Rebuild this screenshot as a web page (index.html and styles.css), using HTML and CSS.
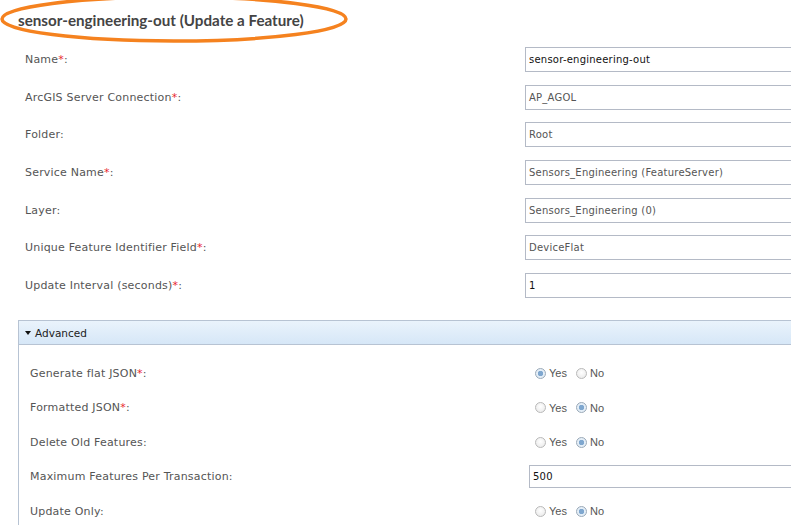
FILE: index.html
```html
<!DOCTYPE html>
<html>
<head>
<meta charset="utf-8">
<link rel="stylesheet" href="styles.css">
</head>
<body>
<div class="page">
  <header class="title-bar">
    <h1 class="title">sensor-engineering-out (Update a Feature)</h1>
    <svg class="annot" width="352" height="46" viewBox="0 0 352 46"><ellipse cx="174" cy="19" rx="172" ry="22" fill="none" stroke="#f5821f" stroke-width="3.5"/></svg>
  </header>

  <div class="form">
    <div class="row"><label class="lbl">Name<span class="req">*</span>:</label><div class="field dark">sensor-engineering-out</div></div>
    <div class="row"><label class="lbl">ArcGIS Server Connection<span class="req">*</span>:</label><div class="field">AP_AGOL</div></div>
    <div class="row"><label class="lbl">Folder:</label><div class="field">Root</div></div>
    <div class="row"><label class="lbl">Service Name<span class="req">*</span>:</label><div class="field">Sensors_Engineering (FeatureServer)</div></div>
    <div class="row"><label class="lbl">Layer:</label><div class="field">Sensors_Engineering (0)</div></div>
    <div class="row"><label class="lbl">Unique Feature Identifier Field<span class="req">*</span>:</label><div class="field">DeviceFlat</div></div>
    <div class="row"><label class="lbl">Update Interval (seconds)<span class="req">*</span>:</label><div class="field dark">1</div></div>
  </div>

  <section class="panel">
    <div class="panel-head"><span class="caret"></span>Advanced</div>
    <div class="panel-body">
      <div class="arow"><label class="lbl">Generate flat JSON<span class="req">*</span>:</label>
        <div class="radios"><span class="radio on"></span><span class="rtext">Yes</span><span class="radio"></span><span class="rtext">No</span></div></div>
      <div class="arow"><label class="lbl">Formatted JSON<span class="req">*</span>:</label>
        <div class="radios"><span class="radio"></span><span class="rtext">Yes</span><span class="radio on"></span><span class="rtext">No</span></div></div>
      <div class="arow"><label class="lbl">Delete Old Features:</label>
        <div class="radios"><span class="radio"></span><span class="rtext">Yes</span><span class="radio on"></span><span class="rtext">No</span></div></div>
      <div class="arow"><label class="lbl">Maximum Features Per Transaction:</label>
        <div class="field dark small">500</div></div>
      <div class="arow"><label class="lbl">Update Only:</label>
        <div class="radios"><span class="radio"></span><span class="rtext">Yes</span><span class="radio on"></span><span class="rtext">No</span></div></div>
    </div>
  </section>
</div>
</body>
</html>
```

FILE: styles.css
```css
html, body {
  margin: 0;
  padding: 0;
  background: #ffffff;
  overflow: hidden;
}
body {
  width: 791px;
  height: 525px;
  font-family: "DejaVu Sans", Verdana, sans-serif;
  font-size: 10px;
  color: #555555;
}
.page {
  width: 791px;
}
.title-bar {
  position: relative;
  height: 47px;
}
.title {
  margin: 0;
  padding: 11px 0 0 18px;
  font-family: "Lato", "Open Sans", sans-serif;
  font-weight: bold;
  font-size: 15.2px;
  color: #444444;
  line-height: 18px;
}
.annot {
  position: absolute;
  left: 0;
  top: 0;
}
.form {
  display: flex;
  flex-direction: column;
  gap: 13.7px;
  padding-left: 25px;
}
.row {
  display: grid;
  grid-template-columns: 500px 400px;
  align-items: center;
  height: 24px;
}
.lbl {
  white-space: nowrap;
  color: #555555;
  font-size: 11px;
  letter-spacing: 0.2px;
}
.req {
  color: #e8262e;
}
.field {
  box-sizing: border-box;
  height: 25px;
  border: 1px solid #b4bac6;
  padding: 0 0 0 3px;
  display: flex;
  align-items: center;
  color: #555555;
  background: #fff;
  width: 400px;
  letter-spacing: 0.23px;
}
.field.dark {
  color: #111111;
}
.field.small {
  height: 23px;
}
.panel {
  margin: 23px 0 0 18px;
  border: 1px solid #b7c3d3;
  border-right: none;
  border-bottom: none;
}
.panel-head {
  height: 24px;
  box-sizing: border-box;
  display: flex;
  align-items: center;
  padding-left: 6px;
  border-bottom: 1px solid #b7c3d3;
  background: linear-gradient(#eaf3fc, #d6e7f7);
  color: #222222;
  font-size: 10.5px;
}
.caret {
  width: 0;
  height: 0;
  border-left: 3.5px solid transparent;
  border-right: 3.5px solid transparent;
  border-top: 4px solid #111;
  margin-right: 4px;
}
.panel-body {
  padding: 11px 0 0 11px;
  display: flex;
  flex-direction: column;
}
.arow {
  display: grid;
  grid-template-columns: 499px 300px;
  align-items: center;
  height: 34.5px;
}
.radios {
  display: flex;
  align-items: center;
  padding-left: 6px;
  font-family: "Liberation Sans", Arial, sans-serif;
  font-size: 11px;
  color: #555555;
}
.radio {
  box-sizing: border-box;
  width: 11px;
  height: 11px;
  border-radius: 50%;
  border: 1px solid #b9b9b9;
  background: radial-gradient(circle at 50% 40%, #ffffff, #e6e6e6);
  margin-right: 3px;
}
.radio.on {
  border-color: #9aa9b8;
  background: radial-gradient(circle, #7fa7cf 0 2.5px, #e4eef7 3px);
}
.rtext {
  margin-right: 9px;
}
```
